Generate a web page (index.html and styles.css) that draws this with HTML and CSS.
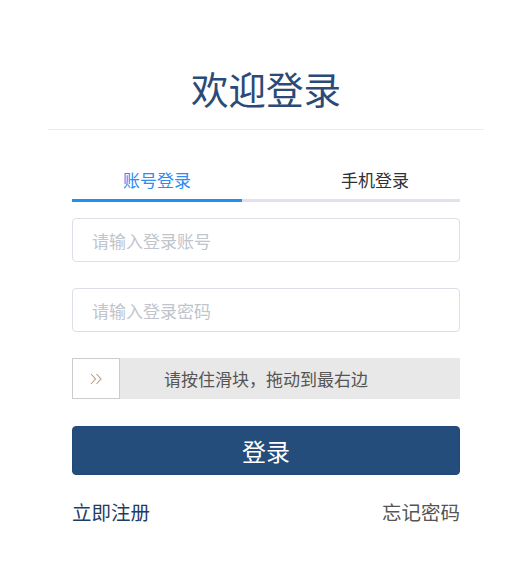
FILE: index.html
```html
<!DOCTYPE html>
<html lang="zh">
<head>
<meta charset="utf-8">
<title>欢迎登录</title>
<link rel="stylesheet" href="styles.css">
</head>
<body>
<div class="card">
  <div class="header"><h1 class="title">欢迎登录</h1></div>
  <div class="form">
    <div class="tabs">
      <div class="tab active">账号登录</div>
      <div class="tab">手机登录</div>
    </div>
    <div class="field"><input class="input" type="text" placeholder="请输入登录账号"></div>
    <div class="field gap"><input class="input" type="password" placeholder="请输入登录密码"></div>
    <div class="slider">
      <div class="handle">
        <svg width="13" height="12" viewBox="0 0 13 12"><path d="M1 1 L5.5 6 L1 11 M6.5 1 L11 6 L6.5 11" fill="none" stroke="#b49c86" stroke-width="1.1"/></svg>
      </div>
      <div class="slider-text">请按住滑块，拖动到最右边</div>
    </div>
    <button class="btn">登录</button>
    <div class="links">
      <a class="link register">立即注册</a>
      <a class="link forget">忘记密码</a>
    </div>
  </div>
</div>
</body>
</html>
```
FILE: styles.css
```css
* { box-sizing: border-box; }
body {
  margin: 0;
  background: #fff;
  font-family: "Noto Sans CJK SC", "Noto Sans", sans-serif;
}
.card {
  width: 436px;
  margin-left: 48px;
}
.header {
  padding-top: 63px;
  padding-bottom: 16px;
  border-bottom: 1px solid #e9ebf0;
}
.title {
  margin: 0;
  font-size: 37.5px;
  line-height: 50px;
  font-weight: 400;
  color: #2b4a78;
  text-align: center;
}
.form {
  padding: 0 24px;
}
.tabs {
  margin-top: 38px;
  display: flex;
  justify-content: space-between;
  border-bottom: 3px solid #dfe2ea;
}
.tab {
  width: 170px;
  text-align: center;
  font-size: 17px;
  line-height: 24px;
  padding-bottom: 7px;
  color: #303133;
}
.tab.active {
  color: #2d8cf0;
  border-bottom: 3px solid #1f8ff0;
  margin-bottom: -3px;
}
.field { margin-top: 16px; }
.field.gap { margin-top: 26px; }
.input {
  display: block;
  width: 100%;
  height: 44px;
  border: 1px solid #dcdfe6;
  border-radius: 4px;
  padding: 0 19px;
  font-family: inherit;
  font-size: 17px;
  color: #333;
  outline: none;
}
.input::placeholder { color: #c0c4cc; }
.slider {
  margin-top: 26px;
  height: 41px;
  background: #e8e8e8;
  position: relative;
  display: flex;
  align-items: center;
  justify-content: center;
}
.handle {
  position: absolute;
  left: 0;
  top: 0;
  width: 48px;
  height: 41px;
  background: #fff;
  border: 1px solid #cccccc;
  display: flex;
  align-items: center;
  justify-content: center;
}
.slider-text {
  font-size: 17px;
  color: #555;
}
.btn {
  display: block;
  width: 100%;
  margin-top: 27px;
  height: 49px;
  border: 1px solid #20487a;
  border-radius: 4px;
  background: #244d7b;
  color: #fff;
  font-family: inherit;
  font-size: 24px;
  cursor: pointer;
}
.links {
  margin-top: 25px;
  display: flex;
  justify-content: space-between;
  font-size: 19.5px;
  line-height: 24px;
}
.link.register { color: #1f3c66; }
.link.forget { color: #555; }
```
